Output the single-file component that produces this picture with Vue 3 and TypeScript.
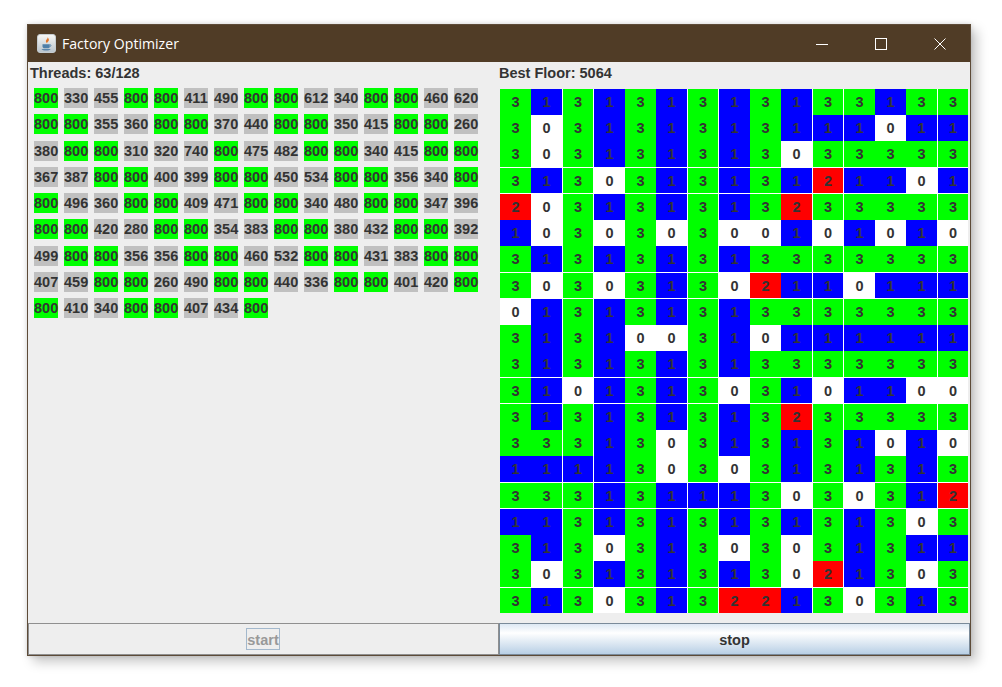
<script setup lang="ts">
const threads: number[] = [
  800, 330, 455, 800, 800, 411, 490, 800, 800, 612, 340, 800, 800, 460, 620,
  800, 800, 355, 360, 800, 800, 370, 440, 800, 800, 350, 415, 800, 800, 260,
  380, 800, 800, 310, 320, 740, 800, 475, 482, 800, 800, 340, 415, 800, 800,
  367, 387, 800, 800, 400, 399, 800, 800, 450, 534, 800, 800, 356, 340, 800,
  800, 496, 360, 800, 800, 409, 471, 800, 800, 340, 480, 800, 800, 347, 396,
  800, 800, 420, 280, 800, 800, 354, 383, 800, 800, 380, 432, 800, 800, 392,
  499, 800, 800, 356, 356, 800, 800, 460, 532, 800, 800, 431, 383, 800, 800,
  407, 459, 800, 800, 260, 490, 800, 800, 440, 336, 800, 800, 401, 420, 800,
  800, 410, 340, 800, 800, 407, 434, 800
]
const maxed = threads.filter((t) => t === 800).length

const floorRows: string[] = [
  '313131313133133',
  '303131313111011',
  '303131313033333',
  '313031313121101',
  '203131313233333',
  '103030300101010',
  '313131313333333',
  '303031302110111',
  '013131313333333',
  '313100310111111',
  '313131313333333',
  '310131303101100',
  '313131313233333',
  '333130313131010',
  '111130303131313',
  '333131113030312',
  '113131313131303',
  '313031303031311',
  '303131313021303',
  '313031322130313'
]
const endCols = new Set([1, 2, 5, 6, 9, 10, 13])
const endRows = new Set([2, 3, 6, 7, 10, 11, 14, 15, 18])
const colNames: Record<string, string> = { '0': 'empty', '1': 'blue', '2': 'red', '3': 'green' }

const cells = floorRows.flatMap((row, r) =>
  row.split('').map((value, c) => ({
    key: `${r}-${c}`,
    value,
    classes: [colNames[value], { 'end-col': endCols.has(c), 'end-row': endRows.has(r) }]
  }))
)
</script>

<template>
  <div class="stage">
    <div class="window">
      <header class="titlebar">
        <span class="app-icon">
          <svg width="19" height="19" viewBox="0 0 19 19">
            <defs>
              <linearGradient id="tile" x1="0" y1="0" x2="0" y2="1">
                <stop offset="0" stop-color="#f7f7f5" />
                <stop offset="1" stop-color="#b9c4cc" />
              </linearGradient>
            </defs>
            <rect x="0.5" y="0.5" width="18" height="18" rx="2.5" fill="url(#tile)" stroke="#c5ccd0" />
            <path d="M10.5 3c1 1.6-2.4 2.900-1.400 5 .3.6.6 1 .9 1.300-.2-1.400 2.800-2.400 1.700-4.400-.3-.6-.7-1.200-1.200-1.900z" fill="#e2762a" />
            <path d="M5.500 10.200h7.200v2.300c0 1.100-1 1.800-2 1.800H7.500c-1 0-2-.7-2-1.800z" fill="#4f7fa8" />
            <path d="M12.700 10.800c1.500-.4 2 1.500-.4 2.200" fill="none" stroke="#4f7fa8" stroke-width="0.900" />
            <path d="M4.500 15h9.200c-.7 1.100-2.500 1.500-4.600 1.500S5.200 16.100 4.500 15z" fill="#5d88ad" />
          </svg>
        </span>
        <span class="title">Factory Optimizer</span>
        <div class="controls">
          <span class="control">
            <svg width="14" height="14" viewBox="0 0 14 14"><path d="M1 7.500h12" stroke="#fff" fill="none" /></svg>
          </span>
          <span class="control">
            <svg width="14" height="14" viewBox="0 0 14 14"><rect x="1.500" y="1.500" width="11" height="11" stroke="#fff" fill="none" /></svg>
          </span>
          <span class="control">
            <svg width="14" height="14" viewBox="0 0 14 14"><path d="M1.500 1.500l11 11M12.500 1.500l-11 11" stroke="#fff" fill="none" /></svg>
          </span>
        </div>
      </header>

      <main class="content">
        <section class="threads">
          <div class="label">Threads: {{ maxed }}/{{ threads.length }}</div>
          <div class="chips">
            <span v-for="(t, i) in threads" :key="i" class="chip" :class="{ full: t === 800 }">{{ t }}</span>
          </div>
        </section>
        <section class="floor">
          <div class="label">Best Floor: 5064</div>
          <div class="grid">
            <span v-for="cell in cells" :key="cell.key" class="cell" :class="cell.classes">{{ cell.value }}</span>
          </div>
        </section>
      </main>

      <footer class="actions">
        <button class="btn start" disabled><span class="focus">start</span></button>
        <button class="btn stop">stop</button>
      </footer>
    </div>
  </div>
</template>

<style>
html,
body {
  margin: 0;
  background: #fff;
}
</style>

<style scoped>
.stage {
  width: 1002px;
  height: 687px;
  padding: 24px 0 0 27px;
  box-sizing: border-box;
  overflow: hidden;
  background: #fff;
}
.window {
  width: 944px;
  height: 632px;
  box-sizing: border-box;
  border: 1px solid #5d4b38;
  background: #eeeeee;
  display: flex;
  flex-direction: column;
  box-shadow: 6px 6px 11px rgba(0, 0, 0, 0.22), 0 0 5px rgba(0, 0, 0, 0.14);
  font-family: "Liberation Sans", Arial, sans-serif;
  font-weight: 700;
  font-size: 14.5px;
  color: #333;
}
.titlebar {
  height: 37px;
  flex: none;
  background: #503c26;
  display: flex;
  align-items: center;
  padding-left: 9px;
  color: #fff;
}
.app-icon {
  display: flex;
  width: 19px;
  height: 19px;
}
.title {
  margin-left: 6px;
  font-family: "Open Sans", "Noto Sans", sans-serif;
  font-weight: 400;
  font-size: 14.1px;
  line-height: 20px;
}
.controls {
  margin-left: auto;
  display: flex;
  padding-right: 1px;
}
.control {
  width: 59px;
  display: flex;
  justify-content: center;
  align-items: center;
}
.content {
  flex: 1;
  display: flex;
  min-height: 0;
}
.threads {
  width: 471px;
  flex: none;
}
.label {
  height: 26px;
  padding: 3px 0 0 2px;
  box-sizing: border-box;
  line-height: 16px;
}
.floor .label {
  padding-left: 0;
  height: 27px;
}
.chips {
  display: grid;
  grid-template-columns: repeat(15, 24px);
  column-gap: 6px;
  grid-auto-rows: 20px;
  row-gap: 6.25px;
  padding-left: 6px;
}
.chip {
  background: #c0c0c0;
  text-align: center;
  line-height: 20px;
}
.chip.full {
  background: #00ff00;
}
.grid {
  margin-left: 1px;
  display: grid;
  grid-template-columns: 31px 32px 31px 31px 31px 32px 31px 31px 31px 32px 31px 31px 31px 32px 30px;
  grid-template-rows: 26px 26px 27px 26px 26px 26px 27px 26px 26px 26px 27px 26px 26px 26px 27px 26px 26px 26px 27px 25px;
}
.cell {
  display: flex;
  align-items: center;
  justify-content: center;
  box-sizing: border-box;
  line-height: 16px;
}
.cell.end-col {
  border-right: 1px solid #fff;
}
.cell.end-row {
  border-bottom: 1px solid #fff;
}
.green {
  background: #00ff00;
}
.blue {
  background: #0000ff;
}
.red {
  background: #ff0000;
}
.empty {
  background: #fff;
}
.actions {
  height: 32px;
  flex: none;
  display: flex;
}
.btn {
  height: 32px;
  box-sizing: border-box;
  margin: 0;
  padding: 0;
  font: inherit;
  color: #333;
}
.start {
  width: 471px;
  background: #eeeeee;
  border: 1px solid #8f8f8f;
  color: #999;
  display: flex;
  align-items: center;
  justify-content: center;
}
.focus {
  display: block;
  height: 22px;
  box-sizing: border-box;
  border: 1px solid #a3b8cc;
  margin: -1px 0 0 -1px;
  padding-top: 1px;
  line-height: 20px;
}
.stop {
  width: 471px;
  border: 1px solid #7a8a99;
  padding-top: 1px;
  background: linear-gradient(to bottom, #dde8f3 0%, #ffffff 30%, #b8cfe5 100%);
}
</style>
